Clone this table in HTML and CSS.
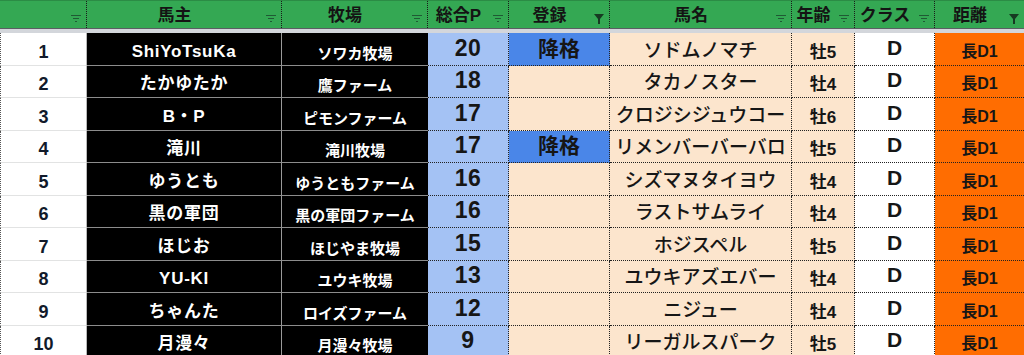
FILE: index.html
```html
<!DOCTYPE html>
<html lang="ja">
<head>
<meta charset="utf-8">
<title>馬主ランキング</title>
<link rel="stylesheet" href="styles.css">
</head>
<body>
<div class="sheet">
  <div class="row head">
    <div class="hc"><span class="hl"></span><svg class="fi" width="10" height="7" viewBox="0 0 10 7"><rect x="0" y="0" width="10" height="1"/><rect x="2" y="3" width="6" height="1"/><rect x="4" y="6" width="2" height="1"/></svg></div>
    <div class="hc"><span class="hl">馬主</span><svg class="fi" width="10" height="7" viewBox="0 0 10 7"><rect x="0" y="0" width="10" height="1"/><rect x="2" y="3" width="6" height="1"/><rect x="4" y="6" width="2" height="1"/></svg></div>
    <div class="hc"><span class="hl">牧場</span><svg class="fi" width="10" height="7" viewBox="0 0 10 7"><rect x="0" y="0" width="10" height="1"/><rect x="2" y="3" width="6" height="1"/><rect x="4" y="6" width="2" height="1"/></svg></div>
    <div class="hc"><span class="hl">総合P</span><svg class="fi" width="10" height="7" viewBox="0 0 10 7"><rect x="0" y="0" width="10" height="1"/><rect x="2" y="3" width="6" height="1"/><rect x="4" y="6" width="2" height="1"/></svg></div>
    <div class="hc"><span class="hl">登録</span><svg class="fi on" width="10" height="10" viewBox="0 0 10 10"><polygon points="0,0 10,0 6,5 6,10 4,10 4,5"/></svg></div>
    <div class="hc"><span class="hl">馬名</span><svg class="fi" width="10" height="7" viewBox="0 0 10 7"><rect x="0" y="0" width="10" height="1"/><rect x="2" y="3" width="6" height="1"/><rect x="4" y="6" width="2" height="1"/></svg></div>
    <div class="hc"><span class="hl">年齢</span><svg class="fi" width="10" height="7" viewBox="0 0 10 7"><rect x="0" y="0" width="10" height="1"/><rect x="2" y="3" width="6" height="1"/><rect x="4" y="6" width="2" height="1"/></svg></div>
    <div class="hc"><span class="hl">クラス</span><svg class="fi" width="10" height="7" viewBox="0 0 10 7"><rect x="0" y="0" width="10" height="1"/><rect x="2" y="3" width="6" height="1"/><rect x="4" y="6" width="2" height="1"/></svg></div>
    <div class="hc"><span class="hl">距離</span><svg class="fi on" width="10" height="10" viewBox="0 0 10 10"><polygon points="0,0 10,0 6,5 6,10 4,10 4,5"/></svg></div>
  </div>
  <div class="band"></div>

  <div class="row">
    <div class="c num">1</div><div class="c owner">ShiYoTsuKa</div><div class="c farm">ソワカ牧場</div><div class="c pts">20</div><div class="c reg down">降格</div><div class="c horse">ソドムノマチ</div><div class="c age">牡5</div><div class="c cls">D</div><div class="c dist">長D1</div>
  </div>
  <div class="row">
    <div class="c num">2</div><div class="c owner">たかゆたか</div><div class="c farm">鷹ファーム</div><div class="c pts">18</div><div class="c reg"></div><div class="c horse">タカノスター</div><div class="c age">牡4</div><div class="c cls">D</div><div class="c dist">長D1</div>
  </div>
  <div class="row">
    <div class="c num">3</div><div class="c owner">B・P</div><div class="c farm">ピモンファーム</div><div class="c pts">17</div><div class="c reg"></div><div class="c horse">クロジシジュウコー</div><div class="c age">牡6</div><div class="c cls">D</div><div class="c dist">長D1</div>
  </div>
  <div class="row">
    <div class="c num">4</div><div class="c owner">滝川</div><div class="c farm">滝川牧場</div><div class="c pts">17</div><div class="c reg down">降格</div><div class="c horse">リメンバーバーバロ</div><div class="c age">牡5</div><div class="c cls">D</div><div class="c dist">長D1</div>
  </div>
  <div class="row">
    <div class="c num">5</div><div class="c owner">ゆうとも</div><div class="c farm">ゆうともファーム</div><div class="c pts">16</div><div class="c reg"></div><div class="c horse">シズマヌタイヨウ</div><div class="c age">牡4</div><div class="c cls">D</div><div class="c dist">長D1</div>
  </div>
  <div class="row">
    <div class="c num">6</div><div class="c owner">黒の軍団</div><div class="c farm">黒の軍団ファーム</div><div class="c pts">16</div><div class="c reg"></div><div class="c horse">ラストサムライ</div><div class="c age">牡4</div><div class="c cls">D</div><div class="c dist">長D1</div>
  </div>
  <div class="row">
    <div class="c num">7</div><div class="c owner">ほじお</div><div class="c farm">ほじやま牧場</div><div class="c pts">15</div><div class="c reg"></div><div class="c horse">ホジスペル</div><div class="c age">牡5</div><div class="c cls">D</div><div class="c dist">長D1</div>
  </div>
  <div class="row">
    <div class="c num">8</div><div class="c owner">YU-KI</div><div class="c farm">ユウキ牧場</div><div class="c pts">13</div><div class="c reg"></div><div class="c horse">ユウキアズエバー</div><div class="c age">牡4</div><div class="c cls">D</div><div class="c dist">長D1</div>
  </div>
  <div class="row">
    <div class="c num">9</div><div class="c owner">ちゃんた</div><div class="c farm">ロイズファーム</div><div class="c pts">12</div><div class="c reg"></div><div class="c horse">ニジュー</div><div class="c age">牡4</div><div class="c cls">D</div><div class="c dist">長D1</div>
  </div>
  <div class="row">
    <div class="c num">10</div><div class="c owner">月漫々</div><div class="c farm">月漫々牧場</div><div class="c pts">9</div><div class="c reg"></div><div class="c horse">リーガルスパーク</div><div class="c age">牡5</div><div class="c cls">D</div><div class="c dist">長D1</div>
  </div>
</div>
</body>
</html>
```

FILE: styles.css
```css
* { box-sizing: border-box; }
html, body { margin: 0; padding: 0; background: #fff; }
body {
  font-family: "Liberation Sans", "Noto Sans CJK JP", sans-serif;
  color: #161616;
  overflow: hidden;
}
.sheet { width: 1024px; }
.row {
  display: grid;
  grid-template-columns: 87px 195px 146px 81px 101px 182px 63px 80px 89px;
  height: 32.5px;
}
.row.head {
  height: 29px;
  background: #34a853;
  border-top: 1px solid #2b8c45;
  border-bottom: 1px solid #5b5f63;
}
.band { height: 4px; background: #d3d6db; }

.hc {
  display: flex;
  align-items: center;
  border-right: 1px dotted #1a1a1a;
  font-weight: bold;
  font-size: 17px;
  line-height: 1;
  color: #141414;
  padding-top: 2px;
}
.hc:last-child { border-right: none; }
.hl { flex: 1; text-align: center; }
.fi {
  flex: none;
  align-self: flex-end;
  margin: 0 5px 6px 4px;
  fill: #1f5a34;
}
.fi.on { fill: #173a22; margin-bottom: 4px; }

.c {
  display: flex;
  align-items: flex-end;
  justify-content: center;
  font-weight: bold;
  line-height: 1;
  border-bottom: 1px dotted #222;
  border-right: 1px dotted #222;
  white-space: nowrap;
}
.num {
  background: #fff;
  font-size: 18px;
  border-left: 1px dotted #555;
  border-right: 1px solid #b8b8b8;
  border-bottom: 1px solid #e2e3e3;
  padding-bottom: 4px;
  color: #111a2a;
}
.owner, .farm {
  background: #000;
  color: #fff;
  border-bottom: 1px solid #8c8c8c;
}
.owner {
  font-size: 17px;
  letter-spacing: 0.7px;
  border-right: 1px solid #9a9a9a;
  padding-bottom: 5px;
}
.farm {
  font-size: 15px;
  border-right: none;
  padding-bottom: 4px;
}
.pts {
  background: #a4c2f4;
  font-size: 23px;
  letter-spacing: 0.5px;
  padding-bottom: 5px;
}
.reg {
  background: #fce5cd;
  font-size: 21px;
  padding-bottom: 6px;
}
.reg.down { background: #4a86e8; }
.horse {
  background: #fce5cd;
  font-size: 19px;
  font-weight: 500;
  padding-bottom: 5px;
}
.age {
  background: #fce5cd;
  font-size: 17px;
  padding-bottom: 4px;
}
.cls {
  background: #fff;
  font-size: 21px;
  padding-bottom: 7px;
}
.dist {
  background: #ff6d01;
  font-size: 16px;
  border-right: none;
  padding-bottom: 5px;
}
```
